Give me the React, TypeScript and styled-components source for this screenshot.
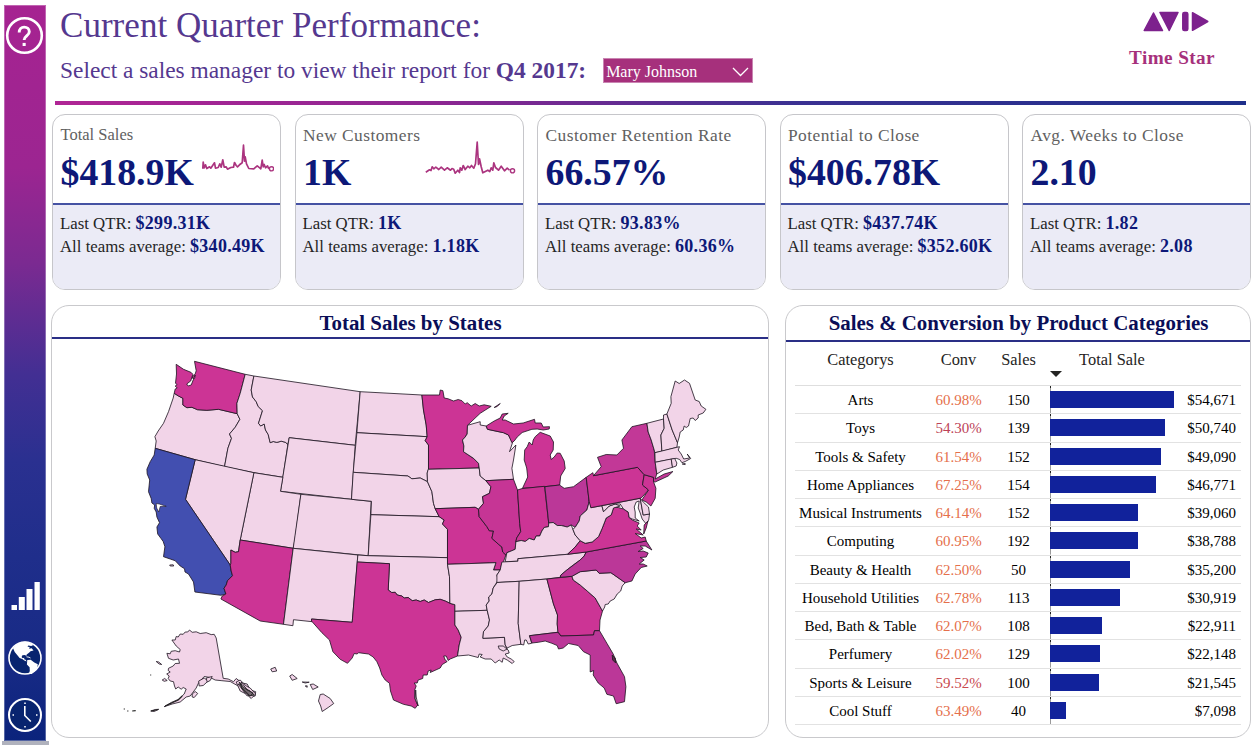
import React from 'react';
import styled, { createGlobalStyle } from 'styled-components';

const GlobalStyle = createGlobalStyle`
  *, *::before, *::after { box-sizing: border-box; }
  body {
    margin: 0;
    background: #fff;
    font-family: 'Liberation Serif', 'Times New Roman', serif;
    overflow: hidden;
  }
  svg { display: block; }
`;

const Page = styled.div`
  width: 1260px;
  height: 746px;
  display: flex;
  background: #fff;
`;

const Rail = styled.aside`
  width: 49px;
  padding: 5px 0 0 2px;
  flex: none;
  display: flex;
  flex-direction: column;
`;

const RailBody = styled.nav`
  width: 42px;
  margin-left: 2px;
  height: 736px;
  display: flex;
  flex-direction: column;
  align-items: center;
  padding: 10px 0 7px;
  border: 1px solid rgba(255, 255, 255, 0.3);
  background: linear-gradient(180deg, #a62391 0%, #9c2591 22%, #7b2a91 35%, #432f93 50%, #2a3090 62%, #1f2e8b 75%, #172a85 90%, #0b237c 100%) border-box;
`;

const RailFoot = styled.div`
  height: 4px;
  background: #b0b2bd;
`;

const Spacer = styled.div`
  flex: 1;
`;

const RailIcon = styled.div<{ $gap?: number }>`
  margin-bottom: ${(p) => p.$gap ?? 0}px;
`;

const Main = styled.main`
  width: 1199px;
  margin-left: 3px;
  display: flex;
  flex-direction: column;
`;

const Header = styled.header`
  height: 101px;
  padding-left: 8px;
  display: flex;
  justify-content: space-between;
  color: #55388f;
`;

const Heading = styled.h1`
  margin: 6px 0 0;
  font-size: 35px;
  line-height: 40px;
  font-weight: 400;
  letter-spacing: 0.04px;
`;

const PickerLine = styled.div`
  margin-top: 10px;
  display: flex;
  align-items: center;
  font-size: 23.4px;
  line-height: 29px;
  white-space: pre;
`;

const Picker = styled.button`
  width: 150px;
  height: 25px;
  margin-left: 17px;
  padding: 3px 3px 0 2px;
  display: flex;
  align-items: center;
  justify-content: space-between;
  border: 1px solid #c985b2;
  background: #a6307c;
  color: #fff;
  font-family: inherit;
  font-size: 16px;
`;

const Brand = styled.div`
  width: 90px;
  margin-right: 34px;
  padding-top: 11px;
  display: flex;
  flex-direction: column;
  align-items: center;
  color: #a6307c;
  font-size: 19.2px;
  font-weight: 700;
  line-height: 24px;
  letter-spacing: 0.4px;
  white-space: nowrap;
  gap: 14px;

  svg { margin-left: 7px; }
`;

const Rule = styled.div`
  height: 4px;
  margin: 0 5px 0 3px;
  background: linear-gradient(90deg, #b02595 0%, #8d2692 32%, #3b3192 62%, #1e2f8b 100%);
`;

const CardRow = styled.section`
  margin-top: 9px;
  height: 176px;
  display: grid;
  grid-template-columns: repeat(5, 1fr);
  gap: 13.5px;
`;

const Card = styled.article`
  border: 1px solid #c6c6ca;
  border-radius: 13px;
  overflow: hidden;
  display: flex;
  flex-direction: column;
`;

const CardTop = styled.div`
  height: 90px;
  padding: 10px 7px 0 7.5px;
  border-bottom: 2px solid #4552a3;
  display: flex;
  flex-direction: column;
`;

const CardLabel = styled.div<{ $size?: number; $track?: number }>`
  font-size: ${(p) => p.$size ?? 17.4}px;
  letter-spacing: ${(p) => p.$track ?? 0.45}px;
  line-height: 20px;
  color: #616161;
  white-space: nowrap;
`;

const CardValueRow = styled.div`
  display: flex;
  justify-content: space-between;
  height: 56px;
`;

const CardValue = styled.div`
  padding-top: 5px;
  font-size: 37.8px;
  line-height: 44px;
  font-weight: 700;
  color: #0d1878;
`;

const CardBottom = styled.div`
  flex: 1;
  padding: 7px 7px 0;
  background: #ebebf6;
  color: #252525;
  font-size: 16.8px;
  line-height: 23px;
  white-space: nowrap;
`;

const Figure = styled.b`
  font-size: 18px;
  letter-spacing: 0.3px;
  color: #0d1878;
`;

const Panels = styled.section`
  margin-top: 15px;
  height: 433px;
  display: flex;
  justify-content: space-between;
  margin-left: -1px;
`;

const Panel = styled.article<{ $width: number }>`
  width: ${(p) => p.$width}px;
  border: 1px solid #c9c9cc;
  border-radius: 18px;
  overflow: hidden;
  display: flex;
  flex-direction: column;
`;

const PanelTitle = styled.h2<{ $height: number }>`
  margin: 0;
  height: ${(p) => p.$height}px;
  padding: 5px 0 0 1px;
  border-bottom: 2px solid #2a2f86;
  text-align: center;
  font-size: 20.9px;
  line-height: 25px;
  color: #0a0e57;
`;

const Table = styled.div`
  padding: 0 9px;
  color: #000;
`;

const gridColumns = '131px 65px 59px 1fr';

const TableHead = styled.div`
  display: grid;
  grid-template-columns: ${gridColumns};
  height: 44px;
  padding-top: 8px;
  text-align: center;
  font-size: 16.4px;
  line-height: 20px;
  color: #252423;
  border-bottom: 1px solid #dedede;

  & > div:nth-child(3) { margin-left: -4px; }
`;

const SaleHead = styled.div`
  position: relative;
  padding-right: 67px;
`;

const SortMark = styled.svg`
  position: absolute;
  left: 0;
  top: 20px;
`;

const Row = styled.div`
  display: grid;
  grid-template-columns: ${gridColumns};
  align-items: center;
  height: 28.25px;
  text-align: center;
  font-size: 15px;
  border-bottom: 1px solid #e2e2e2;
  white-space: nowrap;

  & > div:nth-child(-n + 3) { padding-top: 2px; }
  & > div:nth-child(3) { margin-left: -4px; }
`;

const Conv = styled.div<{ $color: string }>`
  color: ${(p) => p.$color};
`;

const SaleCell = styled.div`
  height: 100%;
  display: flex;
  align-items: center;
  justify-content: space-between;
  padding-right: 5px;
  background: linear-gradient(180deg, #222 0 2px, #9a9a9a 2px) left / 1px 100% no-repeat;

  span { padding-top: 2px; }
`;

const Bar = styled.div`
  height: 17px;
  background: #11229b;
`;

const PINK = '#f2d4e8';
const ROSE = '#cc3495';
const PLUM = '#bb3798';
const BLUE = '#424fb0';

type Shape = { id: string; fill: string; d: string };

const states: Shape[] = [
  { id: 'OR', fill: PINK, d: '174,393.3 178.3,396 182.7,398.3 182.7,405 186.7,407.7 191.7,407.3 197.3,409.7 206.7,410.3 218.3,409.3 237,413.7 239.7,419.3 235,427.3 229.3,434 231.3,438.3 227.7,448.3 224.3,466.7 195,459.7 155,448.3 156,441 154.7,436.7 158,431 163.3,423.3 168.3,411.7 173,398' },
  { id: 'WA', fill: ROSE, d: '176,364.3 183.3,369.3 190.7,372.3 192.7,374.3 190.5,381 186.5,384 188,386 191,385 193,380 194.5,378 195,375 193,379 192,377 195,374 196,370.7 194.3,361.3 245,374.3 240,393.3 236.7,403.3 237,413.7 218.3,409.3 206.7,410.3 197.3,409.7 191.7,407.3 186.7,407.7 182.7,405 182.7,398.3 178.3,396 174,393.3 175,389 177,388 175,386 177,384.6 175.3,383.3 176.3,374' },
  { id: 'ID', fill: PINK, d: '245,374.3 253.7,376 251,390 252.3,397 256,401.7 258,406.5 262.3,410.7 260,418 258.3,423.3 260.5,426 264,424 265.3,430 268,434.5 270,442.7 273,441.5 276.7,442.4 281,441.2 285,442.2 287.7,444.3 282.7,477.3 253.7,472.7 224.3,466.7 227.7,448.3 231.3,438.3 229.3,434 235,427.3 239.7,419.3 237,413.7 236.7,403.3 240,393.3' },
  { id: 'MT', fill: PINK, d: '253.7,376 360,391.7 355,445.3 289,437.7 287.7,444.3 285,442.2 281,441.2 276.7,442.4 273,441.5 270,442.7 268,434.5 265.3,430 264,424 260.5,426 258.3,423.3 260,418 262.3,410.7 258,406.5 256,401.7 252.3,397 251,390' },
  { id: 'WY', fill: PINK, d: '289,437.7 355,445.3 351.3,499.3 280.3,491.3' },
  { id: 'UT', fill: PINK, d: '253.7,472.7 282.7,477.3 280.3,491.3 300.7,494.3 294.7,540 293,548.3 240,540' },
  { id: 'NV', fill: PINK, d: '195,459.7 253.7,472.7 240,540 238.3,551.7 235,552.3 230.7,550 230.7,563.3 230,565 185.3,499.3' },
  { id: 'CO', fill: PINK, d: '300.7,494.3 351.3,499.3 371,501.3 368,555.7 357.7,554.8 293,548.3' },
  { id: 'CA', fill: BLUE, d: '155,448.3 195,459.7 185.3,499.3 230,565 231,571 232.3,575.7 227.3,580.7 226,585 223.8,588.3 225.7,594 220.7,595.3 194.7,592 193.3,582 188.3,574 184.8,572 184.3,568.7 180,566 175,560.7 170,559 163.3,556.7 164.7,546.7 163,541.5 160.7,538.3 157.5,534 156.7,527 159.3,522.7 156.7,517 156,512 154,508.3 154.5,505 151.7,503 151,498.5 148.3,491.7 149.5,480 147,474 146.7,469.3 150,461.7 154,455' },
  { id: 'AZ', fill: ROSE, d: '240,540 293,548.3 283.3,624.3 260,621 220.7,599 222,596 225.7,594 223.8,588.3 226,585 227.3,580.7 232.3,575.7 231,571 230,565 230.7,563.3 230.7,550 235,552.3 238.3,551.7' },
  { id: 'NM', fill: PINK, d: '293,548.3 357.7,555 352,622.3 311.3,619 312,621.7 293.3,619.7 292.7,625.7 283.3,624.3' },
  { id: 'ND', fill: PINK, d: '360,391.7 421.7,395 423.3,410 426,425 427,436.7 356.7,432.7' },
  { id: 'SD', fill: PINK, d: '356.7,432.7 427,436.7 425,440.7 428.3,445 428.3,469.3 427,473 427.3,481.7 424,480 420,478 411.7,478.8 407.7,476 353,472.3' },
  { id: 'NE', fill: PINK, d: '353,472.3 407.7,476 411.7,478.8 420,478 424,480 427.3,481.7 431.7,491.7 433.3,503.3 435,508.7 439,516.7 370.7,514.7 371.3,501.3 351.3,499.3' },
  { id: 'KS', fill: PINK, d: '370.7,514.7 439,516.7 444,520 442.3,524 447.3,529.3 447.3,557.7 368,555.7' },
  { id: 'OK', fill: PINK, d: '357.7,555 368,555.7 447.3,557.7 447.3,564.3 449.3,576.7 449.7,603.3 445,601 440,599.3 435,599.8 428.3,602.5 424,600 420,601.5 416,600 412,600.7 408,597.5 404,598 401.7,596 397,595 395,592.3 391.5,592.5 388,590 389.3,563.7 357,562' },
  { id: 'TX', fill: ROSE, d: '357,562 389.3,563.7 388,590 391.5,592.5 395,592.3 397,595 401.7,596 404,598 408,597.5 412,600.7 416,600 420,601.5 424,600 428.3,602.5 435,599.8 440,599.3 445,601 449.7,603.3 454.7,604.7 454.7,625 458,630 461,637.3 459,645 457.3,656 450,659 448,660.5 446,656 443.5,656 445,660 447,661.5 442,664.5 440,668 430,672.5 431,670 428,671 427,675 423,675 422.5,678.5 418,680 417,683 414,683 416,686 414.5,690 414.5,698 417.5,705 415,708.3 411,706 403.3,704.3 393.3,700 390.3,691 389.3,683.3 385,680 381.7,675 379.5,668 376.7,661.7 373,657 368.3,654 358.3,652.7 357,654 354,653.5 352,658 347.3,663.3 340,659.3 332.7,651.7 329.3,640 321.7,632.7 311.3,621 311.3,619 352,622.3' },
  { id: 'MN', fill: ROSE, d: '421.7,395 439.3,395 440,390 442.7,390.7 444,398 448,398.8 453.3,401 458,399.5 461.7,400.7 465,404 467,402.7 471,406 475,403.5 479,406 484,404.8 491,406.3 480,413.3 467.3,425.3 467,434 465,437 462.3,440 463.7,446 463.3,451.7 473.3,458.3 478.3,463.3 479,468 428.3,469.3 428.3,445 425,440.7 427,436.7 426,425 423.3,410' },
  { id: 'IA', fill: PINK, d: '428,469.3 479,468 480,476 485.7,480.7 490.7,486.7 489.3,493.3 482.3,496.7 483.3,503.3 478.3,509.3 475,507.3 435,508.7 433.3,503.3 431.7,491.7 427.3,481.7 427,473' },
  { id: 'MO', fill: ROSE, d: '435,508.7 475,507.3 478.3,509.3 479,516.7 486.7,526.7 489,530.7 493.3,531 491.7,538.3 498,544 501.7,547 502.5,552 505.7,555 503.3,561.7 501.5,564 500,570 493.3,570 495.7,562.7 447.3,564.3 447.3,529.3 442.3,524 444,520 439,516.7' },
  { id: 'AR', fill: PINK, d: '447.3,564.3 495.7,562.7 493.3,570 500,570 496.7,575 498,580 493,588 491.7,594 488.5,597 489,601 486,605 487,610.3 454.7,611.3 454.7,604.7 449.7,603.3 449.3,576.7' },
  { id: 'LA', fill: PINK, d: '454.7,611.3 487,610.3 489.3,620 488,626 483.3,631.7 482.7,638.3 504.3,637.3 505,645 507,649 503,651 499,649 498,646 503,646 508,650 509,653 505,654 507,657 511,659 514,661.5 512,663.5 507,660 503,658 502,662.3 499,660 495,663 491,659 485,659 480,657 482,654.5 479,654 478,657.5 468.3,655 457.3,656 459,645 461,637.3 458,630 454.7,625' },
  { id: 'WI', fill: PINK, d: '467.3,425.3 480,421.7 480,425 486,426 487.3,429.3 503.3,432.7 508.3,435 512.3,442.7 509.3,451.7 515.7,445 513.3,460 511.7,468.3 513.3,479.3 485.7,480.7 480,476 479,468 478.3,463.3 473.3,458.3 463.3,451.7 463.7,446 462.3,440 465,437 467,434' },
  { id: 'UP', fill: ROSE, d: '486,426 494,421 500,418 502,414 508,413.3 504,416 502,420 505,420 513.3,424 523,423 534.3,419.3 535,423 541,423 543,427 549.3,426.7 549,429 543,430 537,429 531.7,429.3 522,432.5 517,437 514,441 511.7,442.7 508.3,435 503.3,432.7 487.3,429.3' },
  { id: 'MI', fill: ROSE, d: '522.3,488.3 527.5,477 526.5,468 524,460 524.5,450 527,446.7 529,442 532,445 533,440 535,436.7 540,432.3 550,436 553.3,442 553,450 550,455 551,459.5 554,457 557,453 560,453.3 564,461 565,468.5 560.5,476 559.5,485 557.3,485.3 544.3,486.7' },
  { id: 'IL', fill: '#c63595', d: '485.7,480.7 513.3,479.3 517.3,490 519.5,523.3 520.5,531.7 516.5,538 515.7,541.7 515,549.3 511,551 506.7,552.7 505.7,555 502.5,552 501.7,547 498,544 491.7,538.3 493.3,531 489,530.7 486.7,526.7 479,516.7 478.3,509.3 483.3,503.3 482.3,496.7 489.3,493.3 490.7,486.7' },
  { id: 'IN', fill: ROSE, d: '517.3,490 521.7,488.6 544.3,486.3 548.5,523 548.3,526.7 544,527.5 541.7,531 539.5,536 536,536 534,540 529,538.5 525,541.5 521,540.5 515.7,541.7 516.5,538 520.5,531.7 519.5,523.3' },
  { id: 'OH', fill: PLUM, d: '544.7,486.7 559.3,485 564,488.3 573.3,486.7 586,477.3 589,501.7 586.7,510 580,516 579,521 575,527.3 571,525 567,527 561,525.5 557,525.5 553,522.5 548.5,523' },
  { id: 'KY', fill: PINK, d: '505,561.7 517.7,561.2 517.7,558.7 567.3,554.3 575,547 580,540.7 575,535 572.7,529.3 571,525 567,527 561,525.5 557,525.5 553,522.5 548.5,523 548.3,526.7 544,527.5 541.7,531 539.5,536 536,536 534,540 529,538.5 525,541.5 521,540.5 515.7,541.7 515,549.3 511,551 506.7,552.7' },
  { id: 'TN', fill: PINK, d: '496.7,582.5 519,581.3 546.7,579 560,577.3 560.7,575 566.7,570 573,565 580,560 584,556 586,552 567.3,554.3 517.7,558.7 517.7,561.2 501.7,562 500,570 496.7,575' },
  { id: 'MS', fill: PINK, d: '497,582.5 519,581.3 518,623.3 520.7,644.3 512,645.5 507,648 505,645 504.3,637.3 482.7,638.3 483.3,631.7 488,626 489.3,620 487,610.3 486,605 489,601 488.5,597 491.7,594 493,588' },
  { id: 'AL', fill: PINK, d: '519,581.3 546.7,579 553.3,604 557.3,615 557,624 558,632.2 529.3,635.7 531.5,643.3 528,644 526,640 524.5,640 523.5,645 520.7,644.3 518,623.3' },
  { id: 'GA', fill: ROSE, d: '546.7,579 571.7,576.3 573,580 580,585 587,591 595,598 602.3,611 599.8,620 599.3,630.7 594.3,630.7 593.3,635 560.7,636 557.7,631.7 557,624 557.3,615 553.3,604' },
  { id: 'FL', fill: PLUM, d: '529.3,635.7 557.7,632.3 560.7,636 593.3,635 594.3,630.7 599.3,630.7 606.7,643.3 613,654 616.7,663 624.3,676.7 625.7,686.7 624.3,701.7 616,703.7 613.3,696 606.7,694.3 604,688 598,683 593,675 593.5,670.5 590,672 590,655 583.3,651.7 578,645.5 568.3,643.5 563,648 558.3,649 557,645.5 551.7,643.3 545,641 538,642.3 531.7,643' },
  { id: 'SC', fill: PINK, d: '571.7,576.3 580,571.7 596,570 599,573.3 610.7,572.7 625,582.7 622,586 620.5,591 617,594 614,599 610,601 608,604 605,604.5 604.5,607 602.3,611 595,598 587,591 580,585 573,580' },
  { id: 'NC', fill: PLUM, d: '560,577.3 571.7,576.3 580,571.7 596,570 599,573.3 610.7,572.7 625,582.7 631.7,581 635,574 641,567.5 647,566 643,564 639,564 644,560 640,557.5 646,557 648,553 643,551 638,551.5 643,548.5 640,546 645,546 651.7,550 646,541 586,552 584,556 580,560 566.7,570 560.7,575' },
  { id: 'VA', fill: ROSE, d: '567.3,554.3 586,552 646,541 645,537 641,538 635,533.5 643,535 636,529 641,530 637,526 639,523 632,520 629,517.5 628,512 623.3,509 618,507.5 613.3,507.3 611,515 606,518 602,528.3 598.3,536.7 592,542 585,543.3 580,540.7 575,547' },
  { id: 'WV', fill: PINK, d: '589,497 590.7,507.7 601.7,505.7 603.3,511.7 609,506 615,504 620,506 613.3,508 611,515 606,518 602,528.3 598.3,536.7 592,542 585,543.3 580,540.7 575,535 572.7,529.3 575,527.3 579,521 580,516 586.7,510 589,501.7' },
  { id: 'MD', fill: PINK, d: '601.7,505.7 640,498.3 643,515 649.3,514 648.5,520 646,524 642,519 640,513 638,508 639,501 636,502 634,507 635,512 635,518 639,521 632,519 629,517.5 628,512 623.3,509 620,504 615,504 609,506 603.3,511.7' },
  { id: 'ES', fill: ROSE, d: '647.7,521 646,528 643.5,534 644,525' },
  { id: 'DE', fill: PINK, d: '640,498.3 643,502 648.3,507 649.3,514 643,515' },
  { id: 'PA', fill: ROSE, d: '586,477.3 592.7,472.7 593.3,475.7 637.3,467.3 644,474.7 642.3,485 648.3,490 641,498 590.7,507.7 589,501.7' },
  { id: 'NJ', fill: ROSE, d: '644,474.7 653.3,477.3 653.3,481.7 655.7,488.3 655,498.3 650.7,506 646,502 641.7,500 648.3,490 642.3,485' },
  { id: 'NY', fill: '#c23897', d: '593.3,475.7 601,466.7 597.3,457.3 606,454.5 616.7,455 623.3,448.3 621.7,440 631.7,426.7 646.7,423.3 648,432 651,440 654,450 655,462.3 656.5,474 655,479 664,474 672.7,471.5 668,476 655,482 653.3,481.7 653.3,477.3 644,474.7 637.3,467.3' },
  { id: 'VT', fill: PINK, d: '646.7,423.3 663.3,419 664,428.3 660.7,435 661.7,451.3 654.7,452.7 654,450 651,440 648,432' },
  { id: 'NH', fill: PINK, d: '663.3,419 663.3,415 666.7,414 672,430 677.3,442.7 676.7,447.3 661.7,451.3 660.7,435 664,428.3' },
  { id: 'ME', fill: PINK, d: '666.7,414 671,403.3 670.7,396.7 675,381 679,383.5 684.3,380 689.3,383.3 695,400 699,401.5 701,406 705.7,409.3 703,413 698,415 698,418 695,420.5 693,418 690,418.5 689,423 688.3,426 686,427.5 684,426 683,430 680,432 679,437 677.3,442.7 672,430' },
  { id: 'MA', fill: PINK, d: '654.7,452.7 676.7,447.3 679.3,446.7 678,450 681,454 683.5,459 689.5,458 687,454 690.5,458.5 685,461.5 681.7,462.7 679.5,459.5 676,458.3 655,462.3' },
  { id: 'CT', fill: PINK, d: '655,462.3 671,459 672.3,467.3 663,470 656.7,474' },
  { id: 'RI', fill: PINK, d: '671,459 674.5,458.5 676.7,463 676,466 672.3,467.3' },
  { id: 'AK', fill: PINK, d: '171.7,640 175,640 176,636.5 178,637 180,634 183,634.3 185,632 187.5,632 189.3,630 192,632.3 196,631.8 200,633.5 206,632.7 211,634.6 214,634.3 216,638 223,678.3 228,679 233.3,681.7 236,678.5 242,683 247,684 250,690 255.5,691.7 255,696 250,697 247,692 241,690 238,686 230,681.5 221.7,680.7 215,680 210,677.5 204,676.5 201,680 198.3,683 196,688 190,696 186,697 180,702 172,704 164,706.7 171,702.5 178.3,699.3 184,694 186,689 183,687.5 181,689.2 178,687 175.5,689 174.3,686 173.3,681.7 170,681 168,678.5 169,676 166.5,674 170,672 168,670.5 168.3,668.3 173,666 175,663.5 179.3,663.3 178.3,659 173,660 168.3,658.3 166.7,653.3 170,653.8 171,651.3 175,650.7 179.3,652 180,649.5 176,646' },
];

const specks: string[] = [
  '198.5,681 204,678 208,681 203,685.5 199,686',
  '192,694 195,691.5 197.5,693.5 194,697.5 192,697',
  '206,678 212,676.5 210,680.5 207,682',
  '156,661.5 158.5,662 161.5,664.5 159,664',
  '162,680 164.5,678.5 167,680.5 164,681.3',
  '150.5,711 155,709.5 158.5,709.3 154,711.5',
  '236,682 240,680 246,686 250,688 255.5,694 251,698.5 246,694 240,691',
  '238,684 243,685 250,694 247,696',
  '241,682 247,690 253,693 250,696 241,687',
  '270.5,669 275,667.3 276.5,671 272,671.8',
  '289.5,676 292,674.5 297,678.5 292,680.3',
  '302,682 309,682.2 305,683',
  '305,686 307,685.8 307,687.3',
  '310,684.5 313,684 318,687 312.5,689.5',
  '320,694.5 323,694 330,698.5 333.5,703.5 328,707.5 322,711.5 320.5,706 318.3,701',
  '494,407.5 500,403.5 497,406.5',
  '169.5,565 173,564.8 173.5,566 170,566',
  '682,464 685,463.5 685,464.6',
];

const UsMap = () => (
  <svg width="716" height="398" viewBox="51.8 339 716 398">
    <g stroke="#1c1420" strokeWidth="0.95" strokeOpacity="0.85" strokeLinejoin="round">
      {states.map((s) => (
        <polygon key={s.id} points={s.d} fill={s.fill} />
      ))}
      {specks.map((d) => (
        <polygon key={d} points={d} fill={d.startsWith('494') ? ROSE : PINK} />
      ))}
      <polygon points="156,503.5 159,504 166,506.3 160,506.5 158.5,512 156.5,508" fill="#fff" strokeWidth="0.7" />
      <polygon points="415.5,690 416,697 418,706 415,699" fill="#fff" />
    </g>
    <g fill="#222" stroke="#222" strokeWidth="0.9">
      <path d="M123.500 709h1.200M127 711h1.200M132 711l3.500-.3M150 675h1M151 711l7-1.500M165 706l13-6 4-4" fill="none" strokeWidth="1.200" />
      <path d="M612 655l3 3 .5 5-3-3zM239 682l5 6 6 3 4 4-5 1-7-7z" fillOpacity="0.6" />
    </g>
  </svg>
);

const HelpIcon = () => (
  <svg width="42" height="40" viewBox="1 0 42 40" fill="none" stroke="#fff">
    <circle cx="21.500" cy="19.500" r="17.300" strokeWidth="2.600" />
    <path d="M16.200 16.400c0-3.400 2.200-5.300 5-5.300s5.100 1.900 5.100 4.700c0 3.800-5.200 4.500-5.200 8.200" strokeWidth="2.900" />
    <path d="M19.600 26.900h3.100v3.100h-3.100z" fill="#fff" stroke="none" />
  </svg>
);

const BarsIcon = () => (
  <svg width="30" height="30" viewBox="0 0 30 30" fill="#fff">
    <path d="M1.500 24H7v5H1.500zM8.800 16h6v13h-6zM16.500 8h6v21h-6zM24.500 1h5.300v28h-5.300z" />
  </svg>
);

const GlobeIcon = () => (
  <svg width="36" height="36" viewBox="0 0 36 36">
    <circle cx="18" cy="18" r="16" fill="#08246f" stroke="#fff" strokeWidth="1.600" />
    <path
      fill="#fff"
      d="M6 8 9 5l4-2.500L18 1.600l4 .6 4.500 2.800-2.300 1-2.900-.6-.8 1.300 2.200.4-.6 1.600 2.600-.4 1.800 2.200-3 .8-1.500 1.500-2.300 1.700-.5 1.800-1-1.400-2.800.3-.8 1.700 1 1.300 1.700-.4-.2 1.500 1.500.4 1 1.800-2.300-.9-2-1.500-2.700-1-2-2.500L7.700 12z"
    />
    <path fill="#fff" d="m20.300 20 3.400-.2 3.600 2.600 3.500 1.900-.5 3-1.700 3.200-3.900 3.500-2.600-.5.700-2.800-.2-3.400-2.700-2.800z" />
    <path d="m19.500 16.800 2.500.4 1.500.8" stroke="#fff" strokeWidth="0.900" fill="none" />
  </svg>
);

const ClockIcon = () => (
  <svg width="36" height="36" viewBox="0 0 36 36" fill="none" stroke="#fff">
    <circle cx="18" cy="18" r="16" fill="#08246f" strokeWidth="2" />
    <path d="M17.800 9v9.500l6 6" strokeWidth="1.600" />
    <path d="M18 5.500v1.500M18 29v1.500M5.500 18H7M29 18h1.500" strokeWidth="1.500" />
  </svg>
);

const Logo = () => (
  <svg width="66" height="21" viewBox="0 0 66 21" fill="#7d218d" stroke="#7d218d" strokeWidth="1.500" strokeLinejoin="round">
    <path d="M10.500 2 19.500 19.500H1.200zM17 1.500h18L26.200 19.500z" />
    <rect x="39.800" y="1.500" width="5" height="18" rx="1.500" />
    <path d="M49.500 1.700 64.800 10.500 49.500 19.300z" />
  </svg>
);

type Spark = { width: number; height: number; points: string; cx: number; cy: number; top: number };

const sparks: Record<string, Spark> = {
  sales: {
    width: 73,
    height: 30,
    top: -1,
    points:
      '1.8,24.8 2.2,18.2 3.2,23.8 4.5,20.8 5.8,24.5 8.5,22.8 9.8,24.2 13.5,18.8 14.5,24.2 17.2,23.5 18.8,19.8 20.2,23.2 21.8,15.8 23.2,23.2 25.2,22.8 26.5,25.2 29.8,23.5 32.5,23.2 33.5,18.5 35.2,21.5 36.5,22.8 38.5,20.8 41.2,18.8 42.5,1.2 43.5,17.2 44.2,12.8 45.5,19.8 47.8,24.5 52.8,24.8 56.2,21.8 57.8,23.2 59.8,24.8 61.2,16.2 62.2,22.8 63.2,20.5 64.5,23.8 66.5,21.8 67.8,24.8',
    cx: 70.5,
    cy: 24.8,
  },
  customers: {
    width: 91,
    height: 36,
    top: -5,
    points:
      '0.8,32.2 4.5,29.8 6,30.5 7.2,26.8 8.8,28.8 10.8,27.2 13.8,29.5 16.2,27.2 19.5,30.2 22.2,27.8 25.5,30.2 27,28.5 28.7,29.2 30.2,33.2 32.8,30.2 34.5,32.5 35.2,27.8 36.8,30.2 38.2,25.5 40.2,29.5 42.8,26.2 44.8,27.8 46.5,25.5 48.8,28.2 50.5,23.8 52.2,2.2 53.5,24.5 54.5,18.8 56.2,26.8 57.8,32.8 62.8,30.2 64.8,31.5 66.2,27.8 67.8,30.2 68.8,22.8 70.5,27.5 73.5,30.2 76.2,26.2 79.5,30.8 82.2,28.2 84.5,30.2',
    cx: 87.5,
    cy: 30.8,
  },
};

const SparkBox = styled.div<{ $top: number }>`
  margin-top: ${(p) => p.$top}px;
  margin-right: -0.5px;
`;

const Sparkline = ({ kind }: { kind: string }) => {
  const s = sparks[kind];
  return (
    <SparkBox $top={s.top}>
      <svg width={s.width} height={s.height} viewBox={`0 0 ${s.width} ${s.height}`} fill="none" stroke="#ab347f" strokeWidth="1.700">
        <polyline points={s.points} strokeLinejoin="round" />
        <circle cx={s.cx} cy={s.cy} r="2.100" fill="#fff" strokeWidth="1.400" />
      </svg>
    </SparkBox>
  );
};

const cards = [
  { label: 'Total Sales', size: 16.5, track: 0, value: '$418.9K', last: '$299.31K', avg: '$340.49K', spark: 'sales' },
  { label: 'New Customers', value: '1K', last: '1K', avg: '1.18K', spark: 'customers' },
  { label: 'Customer Retention Rate', value: '66.57%', last: '93.83%', avg: '60.36%' },
  { label: 'Potential to Close', value: '$406.78K', last: '$437.74K', avg: '$352.60K' },
  { label: 'Avg. Weeks to Close', value: '2.10', last: '1.82', avg: '2.08' },
];

const ORANGE = '#e56f4b';

const rows: [string, string, number, number, string][] = [
  ['Arts', '60.98%', 150, 54671, ORANGE],
  ['Toys', '54.30%', 139, 50740, '#bd4358'],
  ['Tools & Safety', '61.54%', 152, 49090, ORANGE],
  ['Home Appliances', '67.25%', 154, 46771, ORANGE],
  ['Musical Instruments', '64.14%', 152, 39060, ORANGE],
  ['Computing', '60.95%', 192, 38788, ORANGE],
  ['Beauty & Health', '62.50%', 50, 35200, ORANGE],
  ['Household Utilities', '62.78%', 113, 30919, ORANGE],
  ['Bed, Bath & Table', '62.07%', 108, 22911, ORANGE],
  ['Perfumery', '62.02%', 129, 22148, ORANGE],
  ['Sports & Leisure', '59.52%', 100, 21545, '#c94a50'],
  ['Cool Stuff', '63.49%', 40, 7098, ORANGE],
];

export default function App() {
  return (
    <>
      <GlobalStyle />
      <Page>
        <Rail>
          <RailBody>
            <RailIcon><HelpIcon /></RailIcon>
            <Spacer />
            <RailIcon $gap={29}><BarsIcon /></RailIcon>
            <RailIcon $gap={21}><GlobeIcon /></RailIcon>
            <RailIcon><ClockIcon /></RailIcon>
          </RailBody>
          <RailFoot />
        </Rail>
        <Main>
          <Header>
            <div>
              <Heading>Current Quarter Performance:</Heading>
              <PickerLine>
                <span>Select a sales manager to view their report for <b>Q4 2017:</b></span>
                <Picker>
                  Mary Johnson
                  <svg width="17" height="10" viewBox="0 0 17 10" fill="none" stroke="#fff" strokeWidth="1.300">
                    <path d="m1 1 7.500 7.500L16 1" />
                  </svg>
                </Picker>
              </PickerLine>
            </div>
            <Brand>
              <Logo />
              Time Star
            </Brand>
          </Header>
          <Rule />
          <CardRow>
            {cards.map((c) => (
              <Card key={c.label}>
                <CardTop>
                  <CardLabel $size={c.size} $track={c.track}>{c.label}</CardLabel>
                  <CardValueRow>
                    <CardValue>{c.value}</CardValue>
                    {c.spark && <Sparkline kind={c.spark} />}
                  </CardValueRow>
                </CardTop>
                <CardBottom>
                  <div>Last QTR: <Figure>{c.last}</Figure></div>
                  <div>All teams average: <Figure>{c.avg}</Figure></div>
                </CardBottom>
              </Card>
            ))}
          </CardRow>
          <Panels>
            <Panel $width={718}>
              <PanelTitle $height={33}>Total Sales by States</PanelTitle>
              <UsMap />
            </Panel>
            <Panel $width={466}>
              <PanelTitle $height={36}>Sales &amp; Conversion by Product Categories</PanelTitle>
              <Table>
                <TableHead>
                  <div>Categorys</div>
                  <div>Conv</div>
                  <div>Sales</div>
                  <SaleHead>
                    Total Sale
                    <SortMark width="12" height="8" viewBox="0 0 12 8" fill="#252423">
                      <path d="M0 1h12L6 7z" />
                    </SortMark>
                  </SaleHead>
                </TableHead>
                {rows.map(([name, conv, count, total, color]) => (
                  <Row key={name}>
                    <div>{name}</div>
                    <Conv $color={color}>{conv}</Conv>
                    <div>{count}</div>
                    <SaleCell>
                      <Bar style={{ width: (total / 54671) * 123.5 }} />
                      <span>${total.toLocaleString('en-US')}</span>
                    </SaleCell>
                  </Row>
                ))}
              </Table>
            </Panel>
          </Panels>
        </Main>
      </Page>
    </>
  );
}
